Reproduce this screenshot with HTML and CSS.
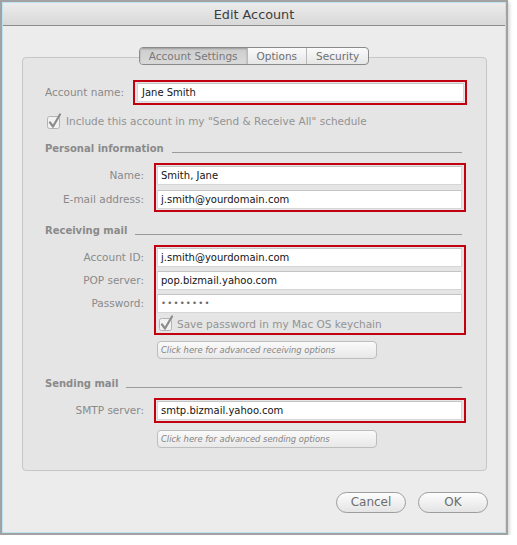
FILE: index.html
```html
<!DOCTYPE html>
<html>
<head>
<meta charset="utf-8">
<link rel="stylesheet" href="styles.css">
</head>
<body>
<div class="window">
  <div class="frame">
    <div class="titlebar">Edit Account</div>
    <div class="content">
      <div class="tabs">
        <span class="tab sel">Account Settings</span>
        <span class="tab">Options</span>
        <span class="tab">Security</span>
      </div>
      <div class="group">
        <div class="acct-row">
          <span class="lbl acct-lbl">Account name:</span>
          <div class="redbox wide"><div class="field">Jane Smith</div></div>
        </div>
        <div class="check first">
          <svg class="cb" width="16" height="17" viewBox="0 0 16 17"><rect x="0.5" y="3.5" width="12" height="12" rx="2" fill="#f2f2f2" stroke="#b3b3b3"/><path d="M3 9.5 L6 13.5 L13 1.5" fill="none" stroke="#8c8c8c" stroke-width="2.2" stroke-linecap="round" stroke-linejoin="round"/></svg>
          <span>Include this account in my "Send &amp; Receive All" schedule</span>
        </div>

        <div class="hdr hdr-personal"><span>Personal information</span><i class="rule"></i></div>
        <div class="block b-personal">
          <div class="labels"><span class="lbl">Name:</span><span class="lbl">E-mail address:</span></div>
          <div class="redbox"><div class="field">Smith, Jane</div><div class="field">j.smith@yourdomain.com</div></div>
        </div>

        <div class="hdr hdr-recv"><span>Receiving mail</span><i class="rule"></i></div>
        <div class="block b-recv">
          <div class="labels"><span class="lbl">Account ID:</span><span class="lbl">POP server:</span><span class="lbl">Password:</span></div>
          <div class="redbox">
            <div class="field">j.smith@yourdomain.com</div>
            <div class="field">pop.bizmail.yahoo.com</div>
            <div class="field pw">••••••••</div>
            <div class="check inner">
              <svg class="cb" width="16" height="17" viewBox="0 0 16 17"><rect x="0.5" y="3.5" width="12" height="12" rx="2" fill="#f2f2f2" stroke="#b3b3b3"/><path d="M3 9.5 L6 13.5 L13 1.5" fill="none" stroke="#8c8c8c" stroke-width="2.2" stroke-linecap="round" stroke-linejoin="round"/></svg>
              <span>Save password in my Mac OS keychain</span>
            </div>
          </div>
        </div>
        <div class="adv">Click here for advanced receiving options</div>

        <div class="hdr hdr-send"><span>Sending mail</span><i class="rule"></i></div>
        <div class="block b-send">
          <div class="labels"><span class="lbl">SMTP server:</span></div>
          <div class="redbox"><div class="field">smtp.bizmail.yahoo.com</div></div>
        </div>
        <div class="adv adv-send">Click here for advanced sending options</div>
      </div>
      <div class="buttons">
        <span class="btn">Cancel</span>
        <span class="btn">OK</span>
      </div>
    </div>
  </div>
</div>
</body>
</html>
```

FILE: styles.css
```css
html, body {
  margin: 0;
  padding: 0;
  background: #ffffff;
}
body {
  font-family: "DejaVu Sans", "Liberation Sans", sans-serif;
}
.window {
  width: 504px;
  height: 531px;
  border: 2px solid #a2a2a2;
  box-shadow: 1px 2px 4px rgba(0, 0, 0, 0.22);
}
.frame {
  height: 529px;
  border: 1px solid #bfe2f3;
  background: #ececec;
}
.titlebar {
  height: 22px;
  line-height: 23px;
  text-align: center;
  font-size: 12.8px;
  color: #3c3c3c;
  background: linear-gradient(#ececec, #d8d8d8);
  border-bottom: 1px solid #8d8d8d;
  border-top-left-radius: 4px;
  border-top-right-radius: 4px;
}
.content {
  display: flex;
  flex-direction: column;
}
.tabs {
  position: relative;
  z-index: 1;
  align-self: center;
  display: flex;
  margin-top: 21px;
  height: 16px;
  border: 1px solid #8a8a8a;
  border-radius: 4px;
  background: linear-gradient(#fbfbfb, #e6e6e6);
  overflow: hidden;
}
.tab {
  font-size: 10.5px;
  line-height: 16px;
  color: #6f6f6f;
  padding: 0 9px 0 9px;
  border-left: 1px solid #b9b9b9;
}
.tab:first-child { border-left: none; }
.tab.sel {
  background: linear-gradient(#cdcdcd, #dadada);
  box-shadow: inset 0 1px 2px rgba(0, 0, 0, 0.25);
  color: #777;
}
.group {
  width: 441px;
  margin: -8px 0 0 19px;
  padding: 22px 0 22px 22px;
  border: 1px solid #c6c6c6;
  border-radius: 4px;
  background: #e5e5e5;
}
.lbl {
  font-size: 10.5px;
  color: #8a8a8a;
  line-height: 19px;
  height: 19px;
  white-space: nowrap;
}
.acct-row {
  display: flex;
  align-items: center;
}
.acct-lbl {
  width: 88px;
}
.redbox {
  width: 305px;
  border: 2px solid #c20010;
  padding: 1px 2px 1px 1px;
  display: flex;
  flex-direction: column;
  gap: 4px;
}
.redbox.wide {
  width: 327px;
  padding-left: 2px;
  padding-right: 1px;
}
.field {
  height: 17px;
  line-height: 17px;
  background: #ffffff;
  border: 1px solid #d6d6d6;
  border-top-color: #c4c4c4;
  padding-left: 3px;
  font-size: 10px;
  color: #141414;
  white-space: nowrap;
}
.redbox.wide .field {
  padding-left: 4px;
}
.field.pw {
  font-size: 8.5px;
  color: #6a6a6a;
  letter-spacing: 1.2px;
}
.check {
  display: flex;
  align-items: center;
  gap: 3px;
  font-size: 10.5px;
  color: #939393;
  height: 16px;
}
.check .cb { flex: none; }
.check.first {
  margin: 8px 0 0 2px;
}
.check.inner {
  margin-top: -2px;
  margin-left: 2px;
  height: 17px;
  gap: 2px;
}
.hdr {
  display: flex;
  align-items: flex-start;
  width: 417px;
  height: 14px;
}
.hdr span {
  font-size: 10px;
  font-weight: bold;
  color: #8a8a8a;
  line-height: 14px;
  white-space: nowrap;
}
.hdr .rule {
  flex: 1;
  height: 1px;
  margin: 10px 0 0 8px;
  background: #9b9b9b;
}
.hdr-personal { margin-top: 13px; }
.hdr-recv { margin-top: 12px; }
.hdr-send { margin-top: 18px; }
.block {
  display: flex;
  margin-top: 7px;
}
.labels {
  width: 99px;
  margin-right: 10px;
  padding-top: 3px;
  display: flex;
  flex-direction: column;
  align-items: flex-end;
  gap: 4px;
}
.b-personal .redbox { gap: 5px; }
.b-personal .labels { gap: 5px; }
.adv {
  width: 215px;
  height: 16px;
  line-height: 16px;
  margin: 6px 0 0 112px;
  padding-left: 3px;
  border: 1px solid #bdbdbd;
  border-radius: 4px;
  background: linear-gradient(#fafafa, #e8e8e8);
  font-size: 8.4px;
  font-style: italic;
  color: #858585;
  white-space: nowrap;
}
.adv-send { margin-top: 7px; }
.buttons {
  display: flex;
  justify-content: flex-end;
  gap: 12px;
  margin: 21px 17px 0 0;
}
.btn {
  width: 68px;
  height: 19px;
  line-height: 19px;
  text-align: center;
  border: 1px solid #9d9d9d;
  border-radius: 11px;
  background: linear-gradient(#fdfdfd, #e4e4e4);
  font-size: 12px;
  color: #6c6c6c;
}
```
